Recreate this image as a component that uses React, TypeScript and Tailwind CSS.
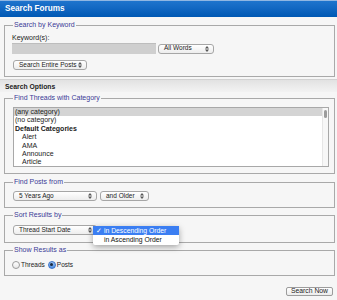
import React from 'react';

const font = { fontFamily: '"Liberation Sans", Arial, sans-serif' };

const Arrows = () => (
  <svg width="4" height="6" viewBox="0 0 4 6" className="shrink-0">
    <path d="M0 2.4 L2 0 L4 2.4 Z" fill="#555" />
    <path d="M0 3.6 L2 6 L4 3.6 Z" fill="#555" />
  </svg>
);

const Select = ({ label, className }: { label: string; className: string }) => (
  <div
    className={`flex items-center justify-between h-[10px] rounded-[3px] border border-[#a6a6a6] bg-gradient-to-b from-white to-[#ededed] pl-[5px] pr-[4px] text-[6.5px] leading-none text-[#222] ${className}`}
  >
    <span>{label}</span>
    <Arrows />
  </div>
);

const Box = ({ legend, className, children }: { legend: string; className: string; children: React.ReactNode }) => (
  <fieldset className={`ml-[4px] mr-[2px] border border-[#a9a9a9] pl-[7px] pr-[5px] ${className}`}>
    <legend className="ml-[1px] px-[1px] text-[7px] leading-[10px] text-[#3b3b96]">{legend}</legend>
    {children}
  </fieldset>
);

const Radio = ({ checked, label }: { checked?: boolean; label: string }) => (
  <label className="flex items-center gap-[1px]">
    {checked ? (
      <span className="flex h-[8px] w-[8px] items-center justify-center rounded-full border border-[#3b73c9] bg-gradient-to-b from-[#9cc3f2] to-[#4d8ee4]">
        <span className="h-[3px] w-[3px] rounded-full bg-[#1a2a40]" />
      </span>
    ) : (
      <span className="h-[8px] w-[8px] rounded-full border border-[#9a9a9a] bg-gradient-to-b from-white to-[#e8e8e8]" />
    )}
    <span className="text-[6.5px] text-[#222]">{label}</span>
  </label>
);

const categories = [
  { t: '(no category)' },
  { t: 'Default Categories', b: true },
  { t: 'Alert', i: true },
  { t: 'AMA', i: true },
  { t: 'Announce', i: true },
  { t: 'Article', i: true },
];

export default function App() {
  return (
    <div className="relative h-[300px] w-[337px] overflow-hidden bg-[#f6f6f6]" style={font}>
      <div className="h-[17px] border-t border-[#8fb6e2] bg-gradient-to-b from-[#1e74cd] to-[#0058b4] pl-[5px] text-[8.2px] font-bold leading-[16px] text-white">
        Search Forums
      </div>

      <Box legend="Search by Keyword" className="mt-[3px] pb-[6px]">
        <div className="pt-[3px] text-[7px] leading-[9px] text-[#222]">Keyword(s):</div>
        <div className="mt-[1px] flex items-center gap-[2px]">
          <div className="h-[11px] w-[144px] border-t border-[#bdbdbd] bg-[#cfcfcf]" />
          <Select label="All Words" className="w-[56px] font-medium" />
        </div>
        <Select label="Search Entire Posts" className="mt-[6px] w-[74px] ml-[1px]" />
      </Box>

      <div className="mt-[2px] h-[13px] border-t border-[#d2d2d2] bg-gradient-to-b from-[#e2e2e2] to-[#f3f3f3] pl-[5px] text-[6.8px] font-bold leading-[13px] text-[#222]">
        Search Options
      </div>

      <Box legend="Find Threads with Category" className="mt-[1px] pb-[6px]">
        <div className="mt-[4px] ml-[1px] flex h-[60px] border border-[#a8a8a8] bg-white text-[7px] leading-[8.4px] text-[#222]">
          <div className="flex-1 overflow-hidden">
            <div className="bg-[#d4d4d4] pl-[1px]">(any category)</div>
            {categories.map((c) => (
              <div
                key={c.t}
                className={`${c.b ? 'font-bold' : ''} ${c.i ? 'pl-[8px]' : 'pl-[1px]'}`}
              >
                {c.t}
              </div>
            ))}
          </div>
          <div className="w-[6px] border-l border-[#e6e6e6] bg-[#f7f7f7] pt-[2px] pl-[1px]">
            <div className="h-[8px] w-[3px] rounded-full bg-[#9c9c9c]" />
          </div>
        </div>
      </Box>

      <Box legend="Find Posts from" className="mt-[3px] pb-[6px]">
        <div className="mt-[4px] ml-[1px] flex gap-[3px]">
          <Select label="5 Years Ago" className="w-[84px]" />
          <Select label="and Older" className="w-[49px]" />
        </div>
      </Box>

      <Box legend="Sort Results by" className="mt-[2px] pb-[7px]">
        <Select label="Thread Start Date" className="mt-[5px] ml-[1px] w-[84px]" />
      </Box>

      <Box legend="Show Results as" className="mt-[2px] pb-[6px]">
        <div className="mt-[5px] flex h-[9px] items-center gap-[3px]">
          <Radio label="Threads" />
          <Radio checked label="Posts" />
        </div>
      </Box>

      <div className="mt-[11px] mr-[4px] flex justify-end">
        <button className="h-[9px] rounded-[2px] border border-[#9c9c9c] bg-gradient-to-b from-white to-[#ececec] px-[4px] text-[6.8px] leading-none text-[#222]">
          Search Now
        </button>
      </div>

      <div className="absolute left-[93px] top-[226px] w-[86px] rounded-[2px] bg-white pb-[1px] text-[6.8px] leading-[9px] text-[#111] shadow-[0_2px_6px_rgba(0,0,0,0.35)]">
        <div className="flex bg-[#3b7ef2] text-white">
          <span className="w-[11px] pl-[3px]">✓</span>
          <span>in Descending Order</span>
        </div>
        <div className="flex">
          <span className="w-[11px]" />
          <span>in Ascending Order</span>
        </div>
      </div>
    </div>
  );
}
